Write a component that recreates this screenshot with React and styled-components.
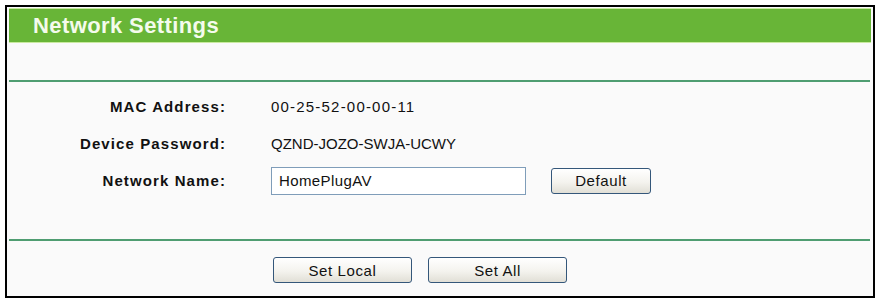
import React from "react";
import styled, { createGlobalStyle } from "styled-components";

const GlobalStyle = createGlobalStyle`
  html, body {
    margin: 0;
    padding: 0;
    background: #ffffff;
  }
  body {
    font-family: "Liberation Sans", Arial, sans-serif;
  }
`;

const Frame = styled.div`
  box-sizing: border-box;
  margin: 5px 0 0 5px;
  width: 870px;
  height: 293px;
  border: 2px solid #000;
  padding: 1px 2px 0 2px;
  background: #fafafa;
  display: flex;
  flex-direction: column;
`;

const Header = styled.div`
  height: 33px;
  flex: none;
  background: #68b537;
  border-top: 1px solid #c9eaa0;
  border-bottom: 1px solid #c9eaa0;
  color: #f4fbec;
  font-size: 22px;
  font-weight: bold;
  letter-spacing: 0.4px;
  display: flex;
  align-items: center;
  padding-left: 24px;
`;

const Spacer = styled.div`
  height: ${(p) => p.$h}px;
  flex: none;
`;

const Divider = styled.div`
  height: 2px;
  flex: none;
  margin-right: 1px;
  background: #4f9d71;
`;

const Form = styled.div`
  display: grid;
  grid-template-columns: 217px 1fr;
  grid-auto-rows: 37px;
  column-gap: 45px;
  align-items: center;
  padding-top: 6px;
`;

const Label = styled.div`
  text-align: right;
  font-weight: bold;
  font-size: 15px;
  letter-spacing: 1.1px;
  color: #111;
`;

const Value = styled.div`
  font-size: 15px;
  letter-spacing: ${(p) => p.$ls || 0}px;
  color: #111;
  display: flex;
  align-items: center;
  gap: 25px;
`;

const TextInput = styled.input`
  box-sizing: border-box;
  width: 255px;
  height: 28px;
  border: 1px solid #7f9db9;
  background: #fff;
  padding: 0 7px;
  font-family: inherit;
  font-size: 15px;
  letter-spacing: 0.4px;
  color: #111;
  outline: none;
`;

const Button = styled.button`
  box-sizing: border-box;
  width: ${(p) => p.$w}px;
  height: 26px;
  border: 1px solid #34577a;
  border-radius: 3px;
  background: linear-gradient(#ffffff 0%, #f4f3ee 55%, #e1dfd6 100%);
  font-family: inherit;
  font-size: 15px;
  letter-spacing: 0.6px;
  color: #111;
  padding: 0;
  cursor: pointer;
`;

const ButtonRow = styled.div`
  display: flex;
  gap: 16px;
  padding: 16px 0 0 264px;
`;

export default function App() {
  return (
    <>
      <GlobalStyle />
      <Frame>
        <Header>Network Settings</Header>
        <Spacer $h={37} />
        <Divider />
        <Form>
          <Label>MAC Address:</Label>
          <Value $ls={1.2}>00-25-52-00-00-11</Value>
          <Label>Device Password:</Label>
          <Value>QZND-JOZO-SWJA-UCWY</Value>
          <Label>Network Name:</Label>
          <Value>
            <TextInput defaultValue="HomePlugAV" />
            <Button $w={100}>Default</Button>
          </Value>
        </Form>
        <Spacer $h={40} />
        <Divider />
        <ButtonRow>
          <Button $w={139}>Set Local</Button>
          <Button $w={139}>Set All</Button>
        </ButtonRow>
      </Frame>
    </>
  );
}
